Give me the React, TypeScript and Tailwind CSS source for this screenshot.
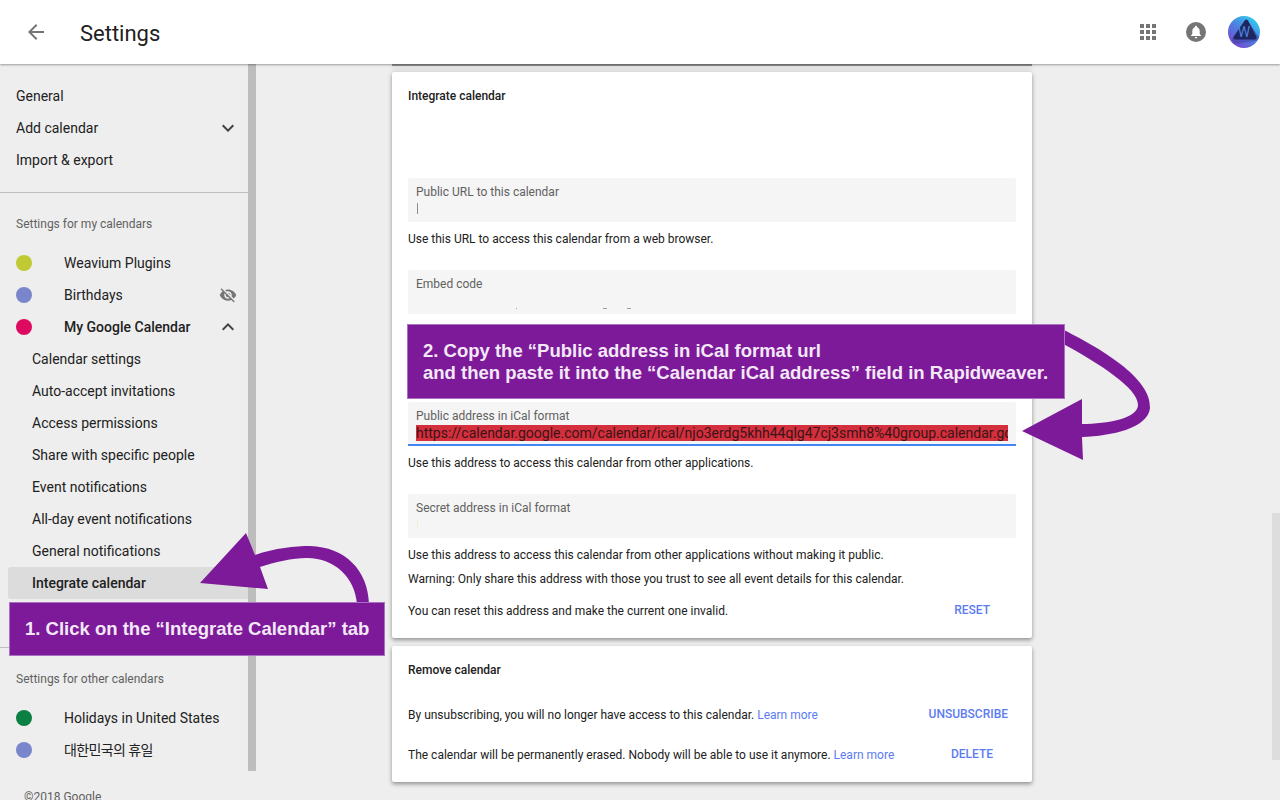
const sans = "font-['Roboto','Noto_Sans_CJK_KR',sans-serif]";

const mainItems = ["Calendar settings", "Auto-accept invitations", "Access permissions", "Share with specific people", "Event notifications", "All-day event notifications", "General notifications"];

function Chevron({ up }: { up?: boolean }) {
    return (
        <svg width="24" height="24" viewBox="0 0 24 24" fill="#424242" className={up ? "rotate-180" : ""}>
            <path d="M16.59 8.59L12 13.17 7.41 8.59 6 10l6 6 6-6z" />
        </svg>
    );
}

function CalendarRow({ color, label, bold, tight, children }: { color: string; label: string; bold?: boolean; tight?: boolean; children?: React.ReactNode }) {
    return (
        <div className="flex h-8 items-center pl-4 pr-2">
            <div className={`h-4 w-4 rounded-full ${color}`}></div>
            <span className={`ml-8 flex-1 text-sm text-[#212121] ${bold ? "font-medium" : ""} ${tight ? "tracking-[-0.6px]" : ""}`}>{label}</span>
            {children}
        </div>
    );
}

function Field({ label, children, active }: { label: string; children?: React.ReactNode; active?: boolean }) {
    return (
        <div className={`h-11 overflow-hidden rounded-t-[2px] bg-[#f5f5f5] px-2 pt-[6px] ${active ? "border-b-2 border-[#4285f4]" : ""}`}>
            <div className="h-4 text-xs leading-4 text-[#616161]">{label}</div>
            {children}
        </div>
    );
}

function Help({ children, className }: { children: React.ReactNode; className?: string }) {
    return <div className={`h-4 text-xs leading-4 text-[#212121] ${className ?? ""}`}>{children}</div>;
}

function Action({ children }: { children: React.ReactNode }) {
    return <span className="-mt-px block text-xs font-medium leading-4 text-[#5c7cf2]">{children}</span>;
}

function Sidebar() {
    return (
        <aside className="flex w-[256px] shrink-0 flex-col">
            <div className="flex h-[707px] shrink-0">
                <div className="w-[248px] overflow-hidden pt-4">
                    <div className="flex h-8 items-center pl-4 text-sm text-[#212121]">General</div>
                    <div className="flex h-8 items-center justify-between pl-4 pr-2 text-sm text-[#212121]">
                        Add calendar
                        <Chevron />
                    </div>
                    <div className="flex h-8 items-center pl-4 text-sm text-[#212121]">Import &amp; export</div>
                    <div className="mt-4 border-t border-[#bdbdbd]"></div>
                    <div className="mt-[23px] h-4 pl-4 text-xs leading-4 text-[#616161]">Settings for my calendars</div>
                    <div className="mt-[15px]">
                        <CalendarRow color="bg-[#c0ca33]" label="Weavium Plugins" />
                        <CalendarRow color="bg-[#7986cb]" label="Birthdays">
                            <svg width="18" height="18" viewBox="0 0 24 24" fill="#757575" className="mr-[3px]">
                                <path d="M12 7c2.76 0 5 2.24 5 5 0 .65-.13 1.26-.36 1.83l2.92 2.92c1.51-1.26 2.7-2.89 3.43-4.75-1.73-4.39-6-7.5-11-7.5-1.4 0-2.74.25-3.98.7l2.16 2.16C10.74 7.13 11.35 7 12 7zM2 4.27l2.28 2.28.46.46C3.08 8.3 1.78 10.02 1 12c1.73 4.39 6 7.5 11 7.5 1.55 0 3.03-.3 4.38-.84l.42.42L19.73 22 21 20.73 3.27 3 2 4.27zM7.53 9.8l1.55 1.55c-.05.21-.08.43-.08.65 0 1.66 1.34 3 3 3 .22 0 .44-.03.65-.08l1.55 1.55c-.67.33-1.41.53-2.2.53-2.76 0-5-2.24-5-5 0-.79.2-1.53.53-2.2zm4.31-.78l3.15 3.15.02-.16c0-1.66-1.34-3-3-3l-.17.01z" />
                            </svg>
                        </CalendarRow>
                        <CalendarRow color="bg-[#dd0a5f]" label="My Google Calendar" bold>
                            <Chevron up />
                        </CalendarRow>
                    </div>
                    {mainItems.map(item => (
                        <div key={item} className="flex h-8 items-center pl-8 text-sm text-[#212121]">{item}</div>
                    ))}
                    <div className="ml-2 flex h-8 items-center rounded-l-[3px] bg-[#dcdcdc] pl-6 text-sm font-medium text-[#212121]">Integrate calendar</div>
                    <div className="mt-12 border-t border-[#bdbdbd]"></div>
                    <div className="mt-[23px] h-4 pl-4 text-xs leading-4 text-[#616161]">Settings for other calendars</div>
                    <div className="mt-[15px]">
                        <CalendarRow color="bg-[#0b8043]" label="Holidays in United States" />
                        <CalendarRow color="bg-[#7986cb]" label="대한민국의 휴일" tight />
                    </div>
                </div>
                <div className="w-2 bg-[#bdbdbd]"></div>
            </div>
            <div className="mt-[18px] pl-6 text-xs leading-4 text-[#616161]">©2018 Google</div>
        </aside>
    );
}

function IntegrateCard() {
    return (
        <section className="h-[566px] rounded-[2px] bg-white px-4 pt-4 shadow-[0_2px_4px_rgba(0,0,0,0.4)]">
            <div className="h-4 text-xs font-medium leading-4 text-[#212121]">Integrate calendar</div>
            <div className="mt-[74px]">
                <Field label="Public URL to this calendar">
                    <div className="ml-px mt-[3px] h-[11px] w-px bg-[#8f8f80]"></div>
                </Field>
            </div>
            <Help className="mt-[9px]">Use this URL to access this calendar from a web browser.</Help>
            <div className="mt-[23px]">
                <Field label="Embed code">
                    <div className="mt-[16px] flex h-px">
                        <div className="ml-[100px] w-px bg-[#9e9e9e]"></div>
                        <div className="ml-[86px] w-1 bg-[#9e9e9e]"></div>
                        <div className="ml-5 w-1 bg-[#9e9e9e]"></div>
                    </div>
                </Field>
            </div>
            <div className="mt-[88px]">
                <Field label="Public address in iCal format" active>
                    <div className="mt-px h-4 w-[592px] overflow-hidden whitespace-nowrap bg-[#d32f3c] text-sm leading-4 text-[#3a1418]">
                        https://calendar.google.com/calendar/ical/njo3erdg5khh44qlg47cj3smh8%40group.calendar.google.com/public/basic.ics
                    </div>
                </Field>
            </div>
            <Help className="mt-[9px]">Use this address to access this calendar from other applications.</Help>
            <div className="mt-[23px]">
                <Field label="Secret address in iCal format">
                    <div className="ml-px mt-[3px] h-[11px] w-px bg-[#f1f0dc]"></div>
                </Field>
            </div>
            <Help className="mt-[9px]">Use this address to access this calendar from other applications without making it public.</Help>
            <Help className="mt-2">Warning: Only share this address with those you trust to see all event details for this calendar.</Help>
            <div className="mt-4 flex h-4 items-start justify-between pr-[26px]">
                <span className="text-xs leading-4 text-[#212121]">You can reset this address and make the current one invalid.</span>
                <Action>RESET</Action>
            </div>
        </section>
    );
}

function RemoveCard() {
    return (
        <section className="mt-2 h-[136px] rounded-[2px] bg-white px-4 pt-4 shadow-[0_2px_4px_rgba(0,0,0,0.4)]">
            <div className="h-4 text-xs font-medium leading-4 text-[#212121]">Remove calendar</div>
            <div className="mt-[29px] flex h-4 items-start justify-between pr-2">
                <span className="text-xs leading-4 text-[#212121]">By unsubscribing, you will no longer have access to this calendar. <span className="text-[#5c7cf2]">Learn more</span></span>
                <Action>UNSUBSCRIBE</Action>
            </div>
            <div className="mt-6 flex h-4 items-start justify-between pr-[23px]">
                <span className="text-xs leading-4 text-[#212121]">The calendar will be permanently erased. Nobody will be able to use it anymore. <span className="text-[#5c7cf2]">Learn more</span></span>
                <Action>DELETE</Action>
            </div>
        </section>
    );
}

function Annotations() {
    return (
        <>
            <svg className="pointer-events-none absolute left-0 top-0" width="1280" height="800" viewBox="0 0 1280 800">
                <g fill="#7d1a9a">
                    <path d="M200 583 L246 533 L255 555 C275 548 295 546 310 546 C345 547 368 570 369 604 L357 604 C355 578 335 558 307 558 C292 558 275 562 260 567 L268 589 Z" />
                    <path d="M1060 328 C1100 348 1152 378 1150 408 C1148 428 1112 436 1082 437 L1083 460 L1022 431 L1082 399 L1082 424 C1108 424 1138 418 1138 405 C1138 388 1100 364 1060 342 Z" />
                </g>
            </svg>
            <div className="absolute left-[9px] top-[602px] flex h-[54px] w-[376px] items-center whitespace-nowrap border border-[#a96fc0] bg-[#7d1a9a] pl-[15px] font-['Liberation_Sans',sans-serif] text-[18.5px] font-bold text-[#f3e9f6]">
                1. Click on the “Integrate Calendar” tab
            </div>
            <div className="absolute left-[407px] top-[324px] flex h-[75px] w-[658px] flex-col justify-center whitespace-nowrap border border-[#a96fc0] bg-[#7d1a9a] pl-[15px] font-['Liberation_Sans',sans-serif] text-[18.5px] font-bold leading-[22px] text-[#f3e9f6]">
                <div>2. Copy the “Public address in iCal format url</div>
                <div>and then paste it into the “Calendar iCal address” field in Rapidweaver.</div>
            </div>
        </>
    );
}

export default function App() {
    return (
        <div className={`relative flex h-[800px] w-[1280px] flex-col overflow-hidden bg-[#eeeeee] ${sans}`}>
            <header className="relative z-10 flex h-16 shrink-0 items-center bg-white pl-6 pr-5 shadow-[0_1px_2px_rgba(0,0,0,0.35)]">
                <svg width="24" height="24" viewBox="0 0 24 24" fill="#757575">
                    <path d="M20 11H7.83l5.59-5.59L12 4l-8 8 8 8 1.41-1.41L7.83 13H20v-2z" />
                </svg>
                <h1 className="ml-8 flex-1 pt-[2px] text-[22px] text-[#212121]">Settings</h1>
                <div className="grid grid-cols-3 gap-[2px]">
                    {[0, 1, 2, 3, 4, 5, 6, 7, 8].map(i => (
                        <div key={i} className="h-1 w-1 bg-[#757575]"></div>
                    ))}
                </div>
                <svg className="ml-[30px]" width="20" height="20" viewBox="0 0 20 20">
                    <circle cx="10" cy="10" r="10" fill="#757575" />
                    <path d="M10 3.8c-.6 0-1 .4-1 1v.5C7.2 5.8 6.3 7.3 6.3 9v3L5 13.5v.6h10v-.6L13.700 12V9c0-1.700-.9-3.200-2.700-3.700v-.5c0-.6-.4-1-1-1z" fill="#ffffff" />
                    <rect x="8.800" y="15" width="2.400" height="1.200" rx=".6" fill="#ffffff" />
                </svg>
                <svg className="ml-[22px]" width="32" height="32" viewBox="0 0 32 32">
                    <defs>
                        <linearGradient id="avatarFill" x1="0.85" y1="0.05" x2="0.15" y2="0.95">
                            <stop offset="0" stopColor="#2fd0f2" />
                            <stop offset="0.5" stopColor="#4d7fe0" />
                            <stop offset="1" stopColor="#7a45d0" />
                        </linearGradient>
                    </defs>
                    <circle cx="16" cy="16" r="16" fill="url(#avatarFill)" />
                    <path d="M19 4 L31 21 Q30 25 27 25 L8 28 Q3 26 4 23 Z" fill="#3b3f9f" opacity="0.55" />
                    <path d="M17 4 Q18.500 3 20 4.500 L28.500 21 Q29 23 27 23.500 L7 23.500 Q5 23 5.500 21 Z" fill="#1f2560" />
                    <text x="16" y="21" textAnchor="middle" fontSize="14" fontFamily="Roboto, sans-serif" fill="#4a84dc">W</text>
                </svg>
            </header>
            <div className="flex min-h-0 flex-1">
                <Sidebar />
                <main className="relative flex-1">
                    <div className="ml-[136px] w-[640px]">
                        <div className="h-[2px] bg-[#909090] shadow-[0_3px_6px_rgba(0,0,0,0.2)]"></div>
                        <div className="pt-[6px]">
                            <IntegrateCard />
                            <RemoveCard />
                        </div>
                    </div>
                    <div className="absolute right-0 top-[449px] h-[247px] w-2 bg-[#dddddd]"></div>
                </main>
            </div>
            <Annotations />
        </div>
    );
}
